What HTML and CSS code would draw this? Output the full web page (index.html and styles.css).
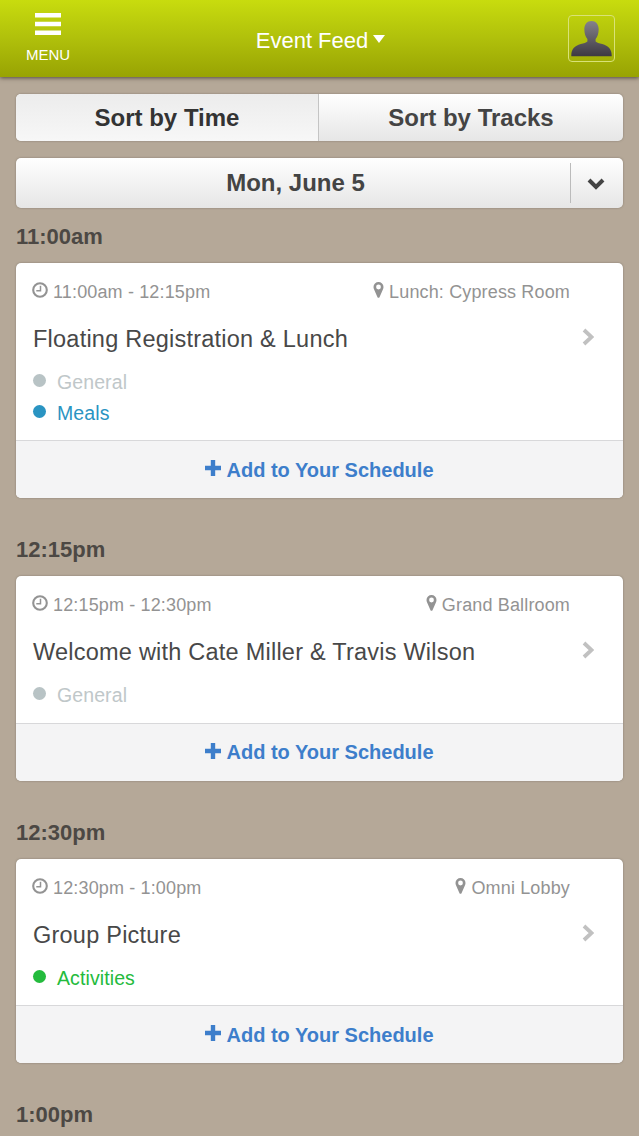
FILE: index.html
```
<!DOCTYPE html>
<html lang="en">

<head>
	<meta charset="UTF-8">
	<title>Event Feed</title>
	<meta name="viewport" content="width=device-width, initial-scale=1.0">
	<link rel="stylesheet" href="styles.css">
</head>

<body>

	<!-- Shared icons -->
	<svg class="sprite">
		<symbol id="clock" viewBox="0 0 16 16">
			<circle cx="8" cy="8" r="6.8" fill="none" stroke="currentColor" stroke-width="2.100" />
			<path d="M8.500 3.800v5H4.300" fill="none" stroke="currentColor" stroke-width="1.500" />
		</symbol>
		<symbol id="pin" viewBox="0 0 10 16">
			<path fill="currentColor" fill-rule="evenodd" d="M5 0a5 5 0 0 1 5 5c0 1-.2 1.700-.6 2.500L6 15.200a1.100 1.100 0 0 1-2 0L.6 7.500C.2 6.700 0 6 0 5a5 5 0 0 1 5-5zM5 2.600a2.400 2.400 0 1 0 0 4.800 2.400 2.400 0 0 0 0-4.800z" />
		</symbol>
		<symbol id="arrow" viewBox="0 0 12 18">
			<path d="M2 2l7.500 7L2 16" fill="none" stroke="currentColor" stroke-width="3.800" />
		</symbol>
		<symbol id="plus" viewBox="0 0 16 16">
			<path d="M8 0v16M0 8h16" fill="none" stroke="currentColor" stroke-width="4.400" />
		</symbol>
	</svg>

	<header class="topbar">
		<a href="#" class="menu">
			<svg class="burger" viewBox="0 0 26 22"><path d="M0 2.200h26M0 11h26M0 19.800h26" stroke="#fff" stroke-width="4.400" /></svg>
			<span>MENU</span>
		</a>
		<a href="#" class="feed">Event Feed <i class="caret"></i></a>
		<a href="#" class="avatar">
			<svg viewBox="0 0 40 35">
				<defs>
					<linearGradient id="shade" x1="0" y1="0" x2="0" y2="1">
						<stop offset="0" stop-color="#85828a" />
						<stop offset="1" stop-color="#3d3942" />
					</linearGradient>
				</defs>
				<path fill="url(#shade)" d="M20 0c4.300 0 7 3.300 7 8 0 4-1.200 7.500-3 9.600v2.400c1.200 1.300 3.500 1.600 6.500 2.500 6 1.800 9.200 5 9.200 11v1H.3v-1c0-6 3.200-9.200 9.200-11 3-.9 5.300-1.200 6.500-2.500v-2.400c-1.800-2.100-3-5.600-3-9.600 0-4.700 2.700-8 7-8z" />
			</svg>
		</a>
	</header>

	<main>
		<div class="sort">
			<a href="#" class="active">Sort by Time</a>
			<a href="#">Sort by Tracks</a>
		</div>

		<div class="day">
			<span class="day-name">Mon, June 5</span>
			<span class="day-toggle">
				<svg viewBox="0 0 18 12"><path d="M2 2l7 7 7-7" fill="none" stroke="#444" stroke-width="4" /></svg>
			</span>
		</div>

		<section>
			<h2>11:00am</h2>
			<article class="card">
				<div class="card-body">
					<div class="info">
						<span><svg class="clock"><use href="#clock" /></svg>11:00am - 12:15pm</span>
						<span><svg class="pin"><use href="#pin" /></svg>Lunch: Cypress Room</span>
					</div>
					<h3>Floating Registration &amp; Lunch <svg class="arrow"><use href="#arrow" /></svg></h3>
					<ul>
						<li class="general">General</li>
						<li class="meals">Meals</li>
					</ul>
				</div>
				<a href="#" class="add"><svg class="plus"><use href="#plus" /></svg>Add to Your Schedule</a>
			</article>
		</section>

		<section>
			<h2>12:15pm</h2>
			<article class="card">
				<div class="card-body">
					<div class="info">
						<span><svg class="clock"><use href="#clock" /></svg>12:15pm - 12:30pm</span>
						<span><svg class="pin"><use href="#pin" /></svg>Grand Ballroom</span>
					</div>
					<h3>Welcome with Cate Miller &amp; Travis Wilson <svg class="arrow"><use href="#arrow" /></svg></h3>
					<ul>
						<li class="general">General</li>
					</ul>
				</div>
				<a href="#" class="add"><svg class="plus"><use href="#plus" /></svg>Add to Your Schedule</a>
			</article>
		</section>

		<section>
			<h2>12:30pm</h2>
			<article class="card">
				<div class="card-body">
					<div class="info">
						<span><svg class="clock"><use href="#clock" /></svg>12:30pm - 1:00pm</span>
						<span><svg class="pin"><use href="#pin" /></svg>Omni Lobby</span>
					</div>
					<h3>Group Picture <svg class="arrow"><use href="#arrow" /></svg></h3>
					<ul>
						<li class="activities">Activities</li>
					</ul>
				</div>
				<a href="#" class="add"><svg class="plus"><use href="#plus" /></svg>Add to Your Schedule</a>
			</article>
		</section>

		<section>
			<h2>1:00pm</h2>
		</section>
	</main>

</body>

</html>
```
FILE: styles.css
```
/* Reset */
* {
	margin: 0;
	padding: 0;
	box-sizing: border-box;
}

body {
	font-family: "Liberation Sans", Arial, Helvetica, sans-serif;
	background-color: #b5a898;
	height: 100vh;
	overflow: hidden;
}

a {
	text-decoration: none;
	color: inherit;
}

svg {
	display: block;
}

.sprite {
	display: none;
}

/* Top bar */
.topbar {
	height: 77px;
	padding: 0 24px 0 26px;
	display: grid;
	grid-template-columns: 1fr auto 1fr;
	align-items: start;
	color: #fff;
	background: linear-gradient(to bottom, #c8dc0e 0%, #b0c00b 50%, #98a303 100%);
	box-shadow: 0 1px 4px rgba(60, 50, 40, 0.8);
}

.menu {
	justify-self: start;
	padding-top: 13px;
	display: flex;
	flex-direction: column;
	align-items: center;
	gap: 11px;
	font-size: 15px;
	line-height: 18px;
}

.burger {
	width: 26px;
	height: 22px;
}

.feed {
	padding-top: 28px;
	display: flex;
	align-items: center;
	gap: 5px;
	font-size: 22px;
	line-height: 26px;
}

.caret {
	border: 6.5px solid transparent;
	border-top: 8px solid #fff;
	border-bottom: none;
	margin-bottom: 4px;
}

.avatar {
	justify-self: end;
	width: 47px;
	height: 47px;
	margin-top: 15px;
	padding: 5px 2px;
	border: 1.5px solid #d9e277;
	border-radius: 4px;
}

/* Sort buttons and day selector */
main {
	padding: 17px 16px 0;
}

.sort,
.day {
	display: flex;
	border-radius: 5px;
	overflow: hidden;
	font-size: 24px;
	font-weight: bold;
	text-align: center;
	color: #444;
	background: linear-gradient(to bottom, #fff, #e6e6e6);
	box-shadow: 0 0 2px rgba(90, 80, 70, 0.6);
}

.sort {
	height: 47px;
	line-height: 48px;
}

.sort a {
	flex: 1;
}

.sort .active {
	flex: 0 0 303px;
	color: #333;
	background: linear-gradient(to bottom, #ececec, #f7f7f7);
	border-right: 1px solid #c4c4c4;
}

.day {
	height: 50px;
	margin-top: 17px;
	line-height: 50px;
	align-items: center;
}

.day-name {
	flex: 1;
	padding-left: 5px;
}

.day-toggle {
	width: 53px;
	height: 40px;
	padding: 2px 0 0 16px;
	display: flex;
	align-items: center;
	border-left: 1px solid #bbb;
}

.day-toggle svg {
	width: 18px;
	height: 12px;
}

/* Feed */
section {
	padding-top: 15px;
	margin-bottom: 23px;
}

h2 {
	font-size: 22px;
	line-height: 28px;
	margin-bottom: 12px;
	color: #4c4844;
}

.card {
	background-color: #fff;
	border-radius: 5px;
	overflow: hidden;
	box-shadow: 0 0 2px rgba(90, 80, 70, 0.6);
}

.card-body {
	padding: 19px 17px 12px;
}

.info {
	display: flex;
	justify-content: space-between;
	padding-right: 36px;
	font-size: 18px;
	line-height: 20px;
	letter-spacing: 0.15px;
	color: #939393;
}

.info span {
	display: flex;
}

.clock {
	width: 16px;
	height: 16px;
	margin: 0 5px 0 -1px;
}

.pin {
	width: 11px;
	height: 16px;
	margin-right: 5px;
}

h3 {
	display: flex;
	justify-content: space-between;
	margin: 22px 0 13px;
	padding-right: 12px;
	font-size: 23.5px;
	font-weight: normal;
	line-height: 30px;
	letter-spacing: 0.23px;
	color: #484848;
}

.arrow {
	width: 12px;
	height: 18px;
	margin-top: 4px;
	color: #c1c1c1;
}

ul {
	list-style: none;
}

li {
	display: flex;
	font-size: 19.5px;
	line-height: 30.5px;
	letter-spacing: 0.1px;
}

li::before {
	content: "";
	width: 13px;
	height: 13px;
	margin: 7px 11px 0 0;
	border-radius: 50%;
	background-color: currentColor;
}

.general {
	color: #c0c7c9;
}

.general::before {
	background-color: #b8c3c5;
}

.meals {
	color: #2a94c2;
}

.activities {
	color: #24bb3d;
}

.add {
	height: 58px;
	padding-top: 1px;
	display: flex;
	justify-content: center;
	align-items: center;
	border-top: 1px solid #d8d8da;
	background-color: #f4f4f5;
	font-size: 20px;
	font-weight: bold;
	color: #3d7ecb;
}

.plus {
	width: 16px;
	height: 16px;
	margin: 0 5px 4px 0;
}
```
